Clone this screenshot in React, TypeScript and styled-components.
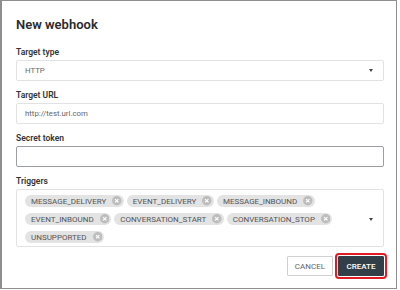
import * as React from 'react';
import styled, { createGlobalStyle } from 'styled-components';

const GlobalStyle = createGlobalStyle`
    html, body { margin:0; padding:0; background:#fff; }
    body { font-family: Roboto, "Liberation Sans", Arial, sans-serif; }
`

const Dialog = styled.div`
    box-sizing:border-box;
    width:397px;
    height:289px;
    border:1px solid #8f8f8f;
    border-left-width:2px;
    padding:14px 12px 0 14px;
    display:flex;
    flex-direction:column;
`
const Title = styled.h2`
    margin:0 0 10px;
    font-size:13px;
    line-height:20px;
    font-weight:600;
    color:#2b2b2b;
`
const Field = styled.div`
    display:flex;
    flex-direction:column;
    margin-bottom:7px;
`
const Label = styled.label`
    font-size:8.5px;
    line-height:14px;
    font-weight:600;
    color:#333;
    margin-bottom:1px;
`
const Box = styled.div<{ $focused?: boolean }>`
    box-sizing:border-box;
    height:21px;
    border:1px solid ${p => p.$focused ? '#9a9ea3' : '#e2e2e2'};
    border-radius:2px;
    display:flex;
    align-items:center;
    padding:0 8px;
    font-size:7.8px;
    color:#666;
`
const Grow = styled.span`
    flex:1;
`
const Caret = styled.span`
    width:0;
    height:0;
    border-left:2px solid transparent;
    border-right:2px solid transparent;
    border-top:3px solid #444;
    margin-right:2px;
`
const ChipsBox = styled.div`
    box-sizing:border-box;
    border:1px solid #e2e2e2;
    border-radius:2px;
    padding:5px 8px 3px 8px;
    display:flex;
    align-items:center;
`
const ChipList = styled.div`
    flex:1;
    display:flex;
    flex-wrap:wrap;
    gap:6px 3px;
`
const Chip = styled.span`
    display:inline-flex;
    align-items:center;
    height:12px;
    border-radius:6px;
    background:#e3e3e3;
    padding:0 2px 0 6px;
    font-size:8px;
    color:#555;
    gap:6px;
`
const Close = styled.svg`
    width:9.5px;
    height:9.5px;
`
const Actions = styled.div`
    display:flex;
    justify-content:flex-end;
    gap:5px;
    margin-top:2px;
`
const Button = styled.button<{ $primary?: boolean }>`
    box-sizing:border-box;
    height:20px;
    padding:0 7px;
    font-family:inherit;
    font-size:8px;
    border-radius:1px;
    border:1px solid ${p => p.$primary ? '#333f48' : '#d0d0d0'};
    background:${p => p.$primary ? '#333f48' : '#fff'};
    color:${p => p.$primary ? '#fff' : '#666'};
    font-weight:${p => p.$primary ? 500 : 400};
    outline:${p => p.$primary ? '2px solid #e01b24' : 'none'};
    outline-offset:1px;
    min-width:46px;
`

const triggers = ['MESSAGE_DELIVERY', 'EVENT_DELIVERY', 'MESSAGE_INBOUND', 'EVENT_INBOUND', 'CONVERSATION_START', 'CONVERSATION_STOP', 'UNSUPPORTED']

const CloseIcon = () => (
    <Close viewBox="0 0 10 10">
        <circle cx="5" cy="5" r="5" fill="#bdbdbd" />
        <path d="M3.2 3.2 L6.8 6.8 M6.8 3.2 L3.2 6.8" stroke="#fff" strokeWidth="1.2" />
    </Close>
)

const App: React.FC = () => {
    return (
        <>
            <GlobalStyle />
            <Dialog>
                <Title>New webhook</Title>
                <Field>
                    <Label>Target type</Label>
                    <Box><Grow>HTTP</Grow><Caret /></Box>
                </Field>
                <Field>
                    <Label>Target URL</Label>
                    <Box>http://test.url.com</Box>
                </Field>
                <Field>
                    <Label>Secret token</Label>
                    <Box $focused />
                </Field>
                <Field>
                    <Label>Triggers</Label>
                    <ChipsBox>
                        <ChipList>
                            {triggers.map(t => (
                                <Chip key={t}>{t}<CloseIcon /></Chip>
                            ))}
                        </ChipList>
                        <Caret />
                    </ChipsBox>
                </Field>
                <Actions>
                    <Button>CANCEL</Button>
                    <Button $primary>CREATE</Button>
                </Actions>
            </Dialog>
        </>
    )
}

export default App
